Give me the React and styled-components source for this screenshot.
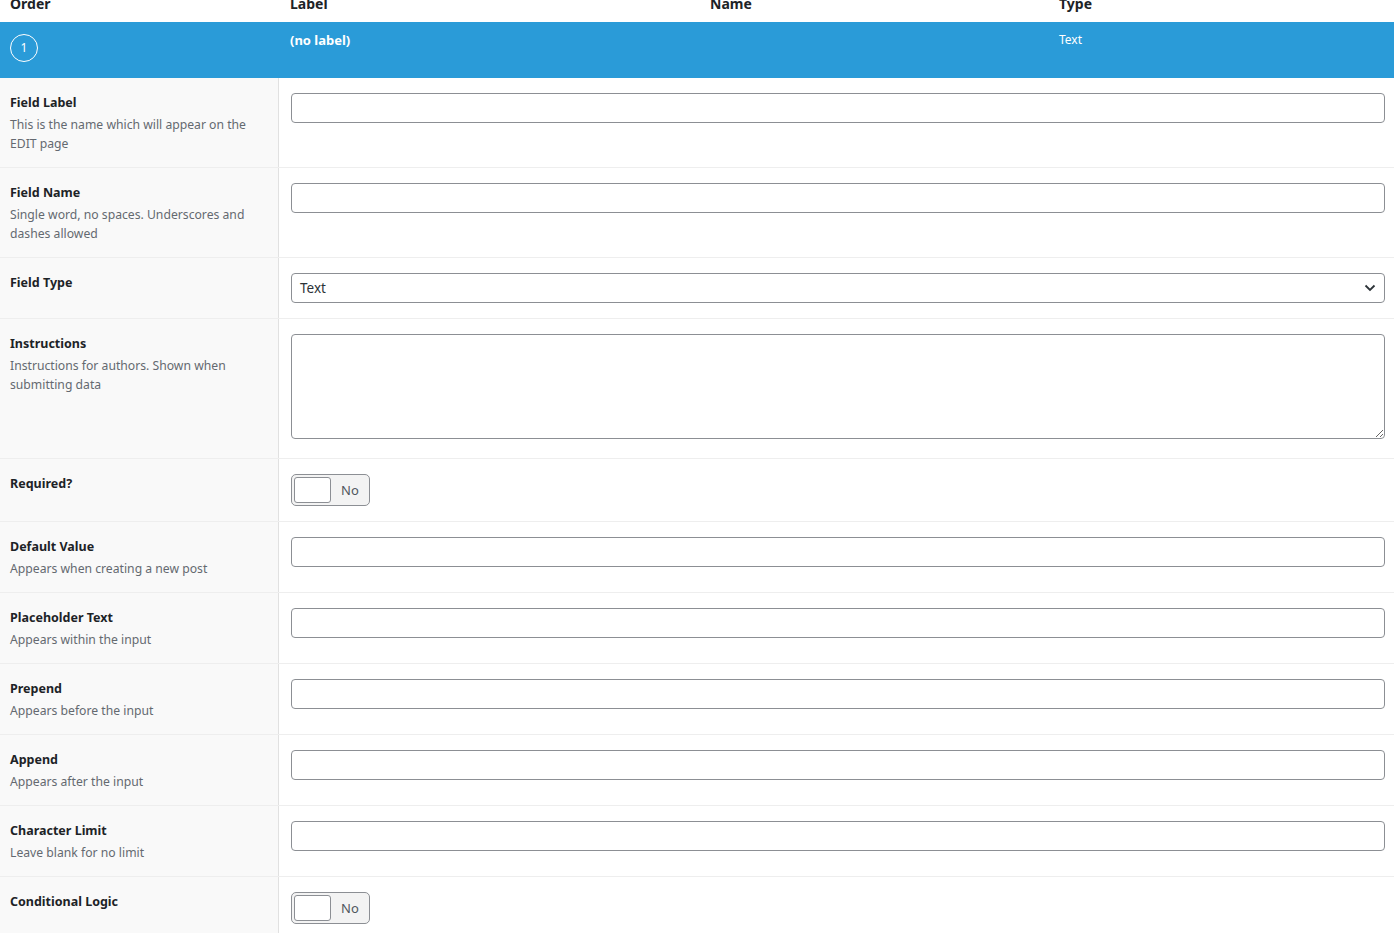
import React from 'react';
import styled, { createGlobalStyle } from 'styled-components';

const GlobalStyle = createGlobalStyle`
  html, body {
    margin: 0;
    padding: 0;
    background: #ffffff;
    font-family: "Noto Sans", "Open Sans", sans-serif;
    color: #1d2327;
    overflow: hidden;
  }
`;

const Page = styled.div`
  width: 1394px;
  margin-top: -6px;
`;

const HeadRow = styled.div`
  display: grid;
  grid-template-columns: 280px 420px 349px 1fr;
  height: 28px;
  align-items: end;
`;

const HeadCell = styled.div`
  padding: 0 10px 9px;
  font-size: 14px;
  font-weight: 700;
  line-height: 18px;
  color: #1d2327;
`;

const FieldBar = styled.div`
  display: grid;
  grid-template-columns: 280px 420px 349px 1fr;
  height: 56px;
  background: #2a9bd8;
  color: #ffffff;
`;

const BarCell = styled.div`
  padding: ${(p) => (p.$top ? p.$top : '9px')} 10px 0;
  font-size: ${(p) => (p.$bold ? '13px' : '12px')};
  font-weight: ${(p) => (p.$bold ? 700 : 400)};
  line-height: 18px;
`;

const OrderBadge = styled.span`
  display: flex;
  align-items: center;
  justify-content: center;
  width: 26px;
  height: 26px;
  border: 1.5px solid #ffffff;
  border-radius: 50%;
  font-size: 12px;
  line-height: 1;
`;

const Row = styled.div`
  display: grid;
  grid-template-columns: 279px 1fr;
  border-bottom: 1px solid #eeeeee;
`;

const LabelCell = styled.div`
  background: #f9f9f9;
  border-right: 1px solid #e1e1e1;
  padding: 16px 10px 14px;
`;

const FieldTitle = styled.div`
  font-size: 12.5px;
  font-weight: 700;
  line-height: 18px;
  color: #1d2327;
  margin-bottom: 3px;
`;

const FieldDesc = styled.div`
  font-size: 12.2px;
  line-height: 19px;
  color: #646970;
`;

const InputCell = styled.div`
  padding: 15px 9px 15px 12px;
`;

const TextInput = styled.input`
  display: block;
  box-sizing: border-box;
  width: 100%;
  height: 30px;
  margin: 0;
  border: 1px solid #8c8f94;
  border-radius: 4px;
  background: #ffffff;
  font-family: inherit;
  font-size: 14px;
`;

const SelectBox = styled.div`
  position: relative;
  box-sizing: border-box;
  height: 30px;
  border: 1px solid #8c8f94;
  border-radius: 4px;
  background: #ffffff;
  display: flex;
  align-items: center;
  padding: 0 8px;
  font-size: 13.5px;
  color: #2c3338;
`;

const Chevron = styled.svg`
  position: absolute;
  right: 8px;
  top: 9px;
`;

const TextArea = styled.textarea`
  display: block;
  box-sizing: border-box;
  width: 100%;
  height: 105px;
  margin: 0 0 4px;
  border: 1px solid #8c8f94;
  border-radius: 4px;
  font-family: inherit;
`;

const Toggle = styled.div`
  box-sizing: border-box;
  width: 79px;
  height: 32px;
  border: 1px solid #8c8f94;
  border-radius: 5px;
  background: #f3f3f3;
  display: flex;
  align-items: center;
  padding: 0 2px;
  gap: 10px;
`;

const Knob = styled.span`
  box-sizing: border-box;
  width: 37px;
  height: 26px;
  background: #ffffff;
  border: 1px solid #8c8f94;
  border-radius: 3px;
`;

const ToggleText = styled.span`
  font-size: 13px;
  color: #50575e;
`;

const fields = [
  { title: 'Field Label', desc: 'This is the name which will appear on the EDIT page', kind: 'text' },
  { title: 'Field Name', desc: 'Single word, no spaces. Underscores and dashes allowed', kind: 'text' },
  { title: 'Field Type', kind: 'select' },
  { title: 'Instructions', desc: 'Instructions for authors. Shown when submitting data', kind: 'area' },
  { title: 'Required?', kind: 'toggle' },
  { title: 'Default Value', desc: 'Appears when creating a new post', kind: 'text' },
  { title: 'Placeholder Text', desc: 'Appears within the input', kind: 'text' },
  { title: 'Prepend', desc: 'Appears before the input', kind: 'text' },
  { title: 'Append', desc: 'Appears after the input', kind: 'text' },
  { title: 'Character Limit', desc: 'Leave blank for no limit', kind: 'text' },
  { title: 'Conditional Logic', kind: 'toggle' },
];

const Control = ({ kind }) => {
  if (kind === 'select') {
    return (
      <SelectBox>
        Text
        <Chevron width="12" height="10" viewBox="0 0 12 10">
          <path d="M1.5 2.5 L6 7 L10.5 2.5" fill="none" stroke="#2c3338" strokeWidth="1.8" />
        </Chevron>
      </SelectBox>
    );
  }
  if (kind === 'area') return <TextArea />;
  if (kind === 'toggle') {
    return (
      <Toggle>
        <Knob />
        <ToggleText>No</ToggleText>
      </Toggle>
    );
  }
  return <TextInput type="text" />;
};

const App = () => {
  return (
    <>
      <GlobalStyle />
      <Page>
        <HeadRow>
          <HeadCell>Order</HeadCell>
          <HeadCell>Label</HeadCell>
          <HeadCell>Name</HeadCell>
          <HeadCell>Type</HeadCell>
        </HeadRow>
        <FieldBar>
          <BarCell $top="12px">
            <OrderBadge>1</OrderBadge>
          </BarCell>
          <BarCell $bold>(no label)</BarCell>
          <BarCell />
          <BarCell>Text</BarCell>
        </FieldBar>
        {fields.map((f) => (
          <Row key={f.title}>
            <LabelCell>
              <FieldTitle>{f.title}</FieldTitle>
              {f.desc && <FieldDesc>{f.desc}</FieldDesc>}
            </LabelCell>
            <InputCell>
              <Control kind={f.kind} />
            </InputCell>
          </Row>
        ))}
      </Page>
    </>
  );
};

export default App;
